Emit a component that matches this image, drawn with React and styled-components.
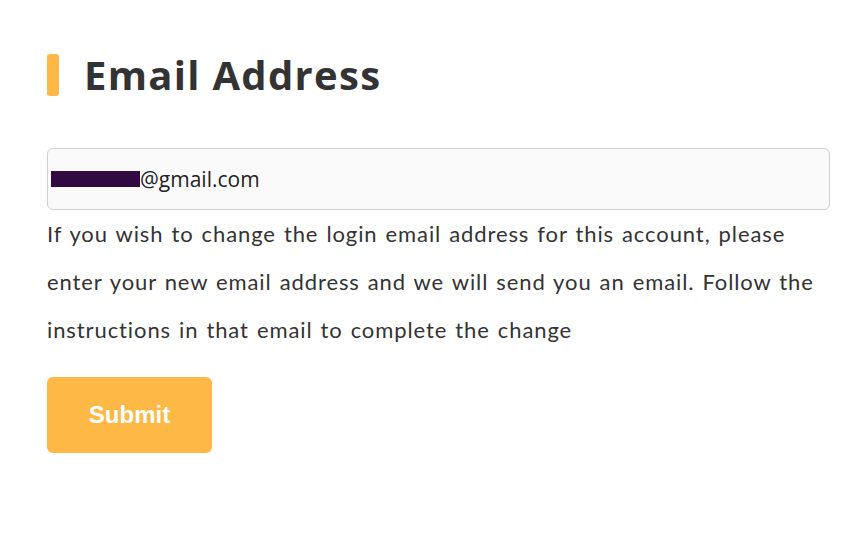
import React from "react"
import styled, { createGlobalStyle } from "styled-components"

const GlobalStyle = createGlobalStyle`
  body {
    margin: 0;
    background: #fff;
    font-family: Lato, "Noto Sans", sans-serif;
    color: #333;
  }
`

const Page = styled.div`
  width: 783px;
  padding: 52px 0 0 47px;
`

const Title = styled.h2`
  display: flex;
  align-items: center;
  gap: 25px;
  margin: 0 0 50px;
  font-family: "Open Sans", sans-serif;
  font-size: 40px;
  font-weight: 700;
  letter-spacing: 1.3px;
  color: #333;
  line-height: 46px;

  &::before {
    content: "";
    width: 12px;
    height: 42px;
    border-radius: 3px;
    background: #fdb845;
  }
`

const EmailBox = styled.div`
  display: flex;
  align-items: center;
  height: 60px;
  padding: 0 3px;
  border: 1px solid #cfcfcf;
  border-radius: 6px;
  background: #fafafa;
  font-family: "Open Sans", sans-serif;
  font-size: 21px;
  color: #222;
`

const Redacted = styled.span`
  display: inline-block;
  width: 89px;
  height: 16px;
  background: #300a40;
`

const Help = styled.p`
  margin: 0 0 23px;
  font-size: 22px;
  letter-spacing: 0.9px;
  word-spacing: 1.5px;
  line-height: 48px;
  color: #333;
`

const Button = styled.button`
  width: 165px;
  height: 76px;
  border: none;
  border-radius: 6px;
  background: #fdb845;
  color: #fff;
  font-family: "Liberation Sans", Arial, sans-serif;
  font-size: 24px;
  font-weight: bold;
`

export default function App() {
  return (
    <>
      <GlobalStyle />
      <Page>
        <Title>Email Address</Title>
        <EmailBox>
          <Redacted />
          @gmail.com
        </EmailBox>
        <Help>
          If you wish to change the login email address for this account, please
          enter your new email address and we will send you an email. Follow the
          instructions in that email to complete the change
        </Help>
        <Button>Submit</Button>
      </Page>
    </>
  )
}
